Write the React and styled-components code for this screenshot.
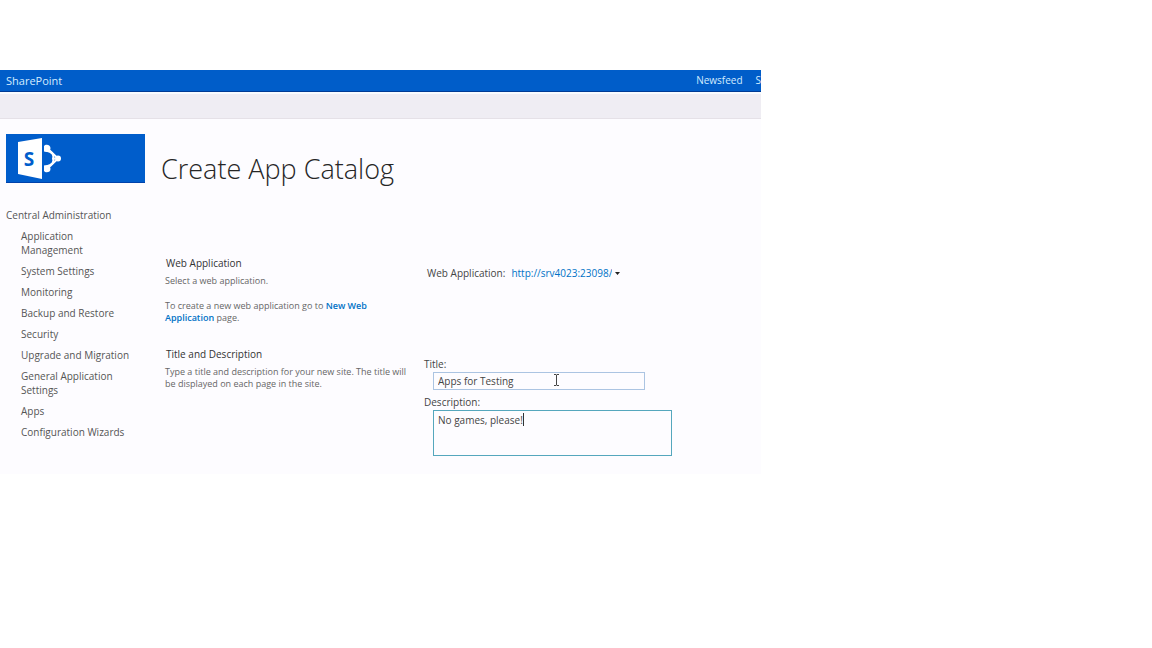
import React from "react";
import styled, { createGlobalStyle } from "styled-components";

const GlobalStyle = createGlobalStyle`
  * { box-sizing: border-box; }
  body {
    margin: 0;
    background: #fff;
    color: #444;
    font: 10px/14px "Open Sans", "Noto Sans", sans-serif;
  }
  a { color: inherit; text-decoration: none; }
  h1, h2, p, ul { margin: 0; padding: 0; font-weight: 400; }
`;

const Page = styled.div`
  display: grid;
  grid-template-columns: minmax(0, 761fr) minmax(0, 391fr);
  padding: 70px 0;
`;

const Site = styled.div`
  background: #fdfcff;
  padding-bottom: 13px;
  overflow: hidden;
`;

const SuiteBar = styled.header`
  display: flex;
  justify-content: space-between;
  height: 22px;
  padding-left: 6px;
  background: #005dc9;
  border-bottom: 1px solid #003a94;
  color: #d3ecff;
  line-height: 21px;
`;

const Brand = styled.a`
  font-size: 11px;
`;

const SuiteLinks = styled.nav`
  display: flex;
  gap: 13px;
`;

const SuiteLink = styled.a`
  white-space: nowrap;
`;

const Ribbon = styled.div`
  height: 27px;
  background: #efedf3;
  border-top: 2px solid #f8fbff;
  border-bottom: 1px solid #e5e1e7;
`;

const TitleRow = styled.div`
  display: flex;
  padding: 15px 6px 0;
  gap: 16px;
`;

const Logo = styled.a`
  display: block;
  flex: none;
  width: 139px;
  height: 49px;
  background: #005dcb;
  border-bottom: 1px solid #0042ab;

  svg { display: block; }
`;

const LogoLetter = styled.text`
  font: 700 19px "Open Sans", sans-serif;
  fill: #005dcb;
  text-anchor: middle;
`;

const PageTitle = styled.h1`
  padding-top: 15px;
  color: #262626;
  font-size: 27px;
  font-weight: 300;
  line-height: 40px;
`;

const Body = styled.div`
  display: flex;
  padding: 13px 6px 0;
`;

const SideNav = styled.nav`
  flex: none;
  width: 159px;
  padding-top: 6px;
  color: #555;
`;

const NavList = styled.ul`
  display: flex;
  flex-direction: column;
  gap: 7px;
  width: 127px;
  padding: 7px 0 0 15px;
  list-style: none;
`;

const Form = styled.form`
  flex: 1;
  min-width: 0;
`;

const Section = styled.section`
  display: grid;
  grid-template-columns: 259px minmax(0, 1fr);
  padding-top: ${(p) => p.$top}px;
`;

const SectionTitle = styled.h2`
  color: #333;
  font-size: 10px;
  line-height: 14px;
  padding-left: 1px;
`;

const Hint = styled.p`
  width: 246px;
  margin-top: ${(p) => p.$gap}px;
  color: #666;
  font-size: 9px;
  line-height: 12px;
`;

const HintLink = styled.a`
  color: #0072c6;
  font-weight: 600;
`;

const Picker = styled.div`
  display: flex;
  align-items: center;
  height: 14px;
  margin-top: 10px;
  padding-left: 3px;
`;

const PickerSelect = styled.select`
  appearance: none;
  margin: 0 3px 0 6px;
  padding: 0;
  border: 0;
  background: transparent;
  color: #0072c6;
  font: inherit;
`;

const Fields = styled.div`
  padding-top: 10px;
`;

const Label = styled.label`
  display: block;
  color: #444;
`;

const Control = styled.div`
  position: relative;
  padding: 1px 0 0 9px;
  margin-bottom: 5px;
`;

const TextInput = styled.input`
  display: block;
  width: 212px;
  height: 18px;
  padding: 0 4px;
  border: 1px solid #abc4e2;
  background: transparent;
  color: #444;
  font: inherit;
`;

const TextArea = styled.textarea`
  display: block;
  width: 239px;
  height: 46px;
  padding: 2px 4px;
  border: 1px solid #55a7bd;
  background: transparent;
  color: #444;
  font: inherit;
  resize: none;
  outline: 0;
`;

const Pointer = styled.svg`
  position: absolute;
  left: 129px;
  top: 3px;
`;

const TextCaret = styled.span`
  position: absolute;
  left: 99px;
  top: 4px;
  width: 1px;
  height: 13px;
  background: #333;
`;

const links = [
  "Application Management",
  "System Settings",
  "Monitoring",
  "Backup and Restore",
  "Security",
  "Upgrade and Migration",
  "General Application Settings",
  "Apps",
  "Configuration Wizards",
];

function SharePointMark() {
  return (
    <svg width="139" height="48" viewBox="0 0 139 48" aria-hidden="true">
      <path d="M12 8 36 4v41L12 40z" fill="#fff" />
      <LogoLetter x="23" y="32">S</LogoLetter>
      <path d="M41 14 52 24.500 41 35" fill="none" stroke="#fff" strokeWidth="2" />
      <path d="M40 16.500c7 1.500 7.500 4 7.500 8s-.5 6.500-7.500 8" fill="none" stroke="#fff" strokeWidth="2" />
      <path d="M38 12c1.500-2.500 7-1.500 6.500 2.500-.3 3-3.500 4-6.500 3zM38 31.500c3-1 6.200 0 6.500 3 .5 4-5 5-6.500 2.500z" fill="#fff" />
      <circle cx="52" cy="24.500" r="3" fill="#fff" />
      <circle cx="47.500" cy="24.500" r="1.500" fill="#fff" />
    </svg>
  );
}

export default function App() {
  return (
    <>
      <GlobalStyle />
      <Page>
        <Site>
          <SuiteBar>
            <Brand href="#">SharePoint</Brand>
            <SuiteLinks>
              <SuiteLink href="#">Newsfeed</SuiteLink>
              <SuiteLink href="#">S</SuiteLink>
            </SuiteLinks>
          </SuiteBar>
          <Ribbon />
          <TitleRow>
            <Logo href="#" aria-label="Home">
              <SharePointMark />
            </Logo>
            <PageTitle>Create App Catalog</PageTitle>
          </TitleRow>
          <Body>
            <SideNav>
              <a href="#">Central Administration</a>
              <NavList>
                {links.map((text) => (
                  <li key={text}>
                    <a href="#">{text}</a>
                  </li>
                ))}
              </NavList>
            </SideNav>
            <Form>
              <Section $top={54}>
                <div>
                  <SectionTitle>Web Application</SectionTitle>
                  <Hint $gap={5}>Select a web application.</Hint>
                  <Hint $gap={13}>
                    To create a new web application go to{" "}
                    <HintLink href="#">New Web Application</HintLink> page.
                  </Hint>
                </div>
                <Picker>
                  <label htmlFor="webapp">Web Application:</label>
                  <PickerSelect id="webapp">
                    <option>http://srv4023:23098/</option>
                  </PickerSelect>
                  <svg width="5" height="3" viewBox="0 0 5 3" aria-hidden="true">
                    <path d="M0 0h5L2.500 3z" fill="#222" />
                  </svg>
                </Picker>
              </Section>
              <Section $top={23}>
                <div>
                  <SectionTitle>Title and Description</SectionTitle>
                  <Hint $gap={5}>
                    Type a title and description for your new site. The title
                    will be displayed on each page in the site.
                  </Hint>
                </div>
                <Fields>
                  <Label htmlFor="title">Title:</Label>
                  <Control>
                    <TextInput id="title" defaultValue="Apps for Testing" />
                    <Pointer width="7" height="12" viewBox="0 0 7 12" aria-hidden="true">
                      <path d="M1 .5h2l.5.500.5-.500h2M3.500 1v10M1 11.500h2l.5-.500.5.500h2" fill="none" stroke="#444" />
                    </Pointer>
                  </Control>
                  <Label htmlFor="description">Description:</Label>
                  <Control>
                    <TextArea id="description" defaultValue="No games, please!" />
                    <TextCaret />
                  </Control>
                </Fields>
              </Section>
            </Form>
          </Body>
        </Site>
      </Page>
    </>
  );
}
